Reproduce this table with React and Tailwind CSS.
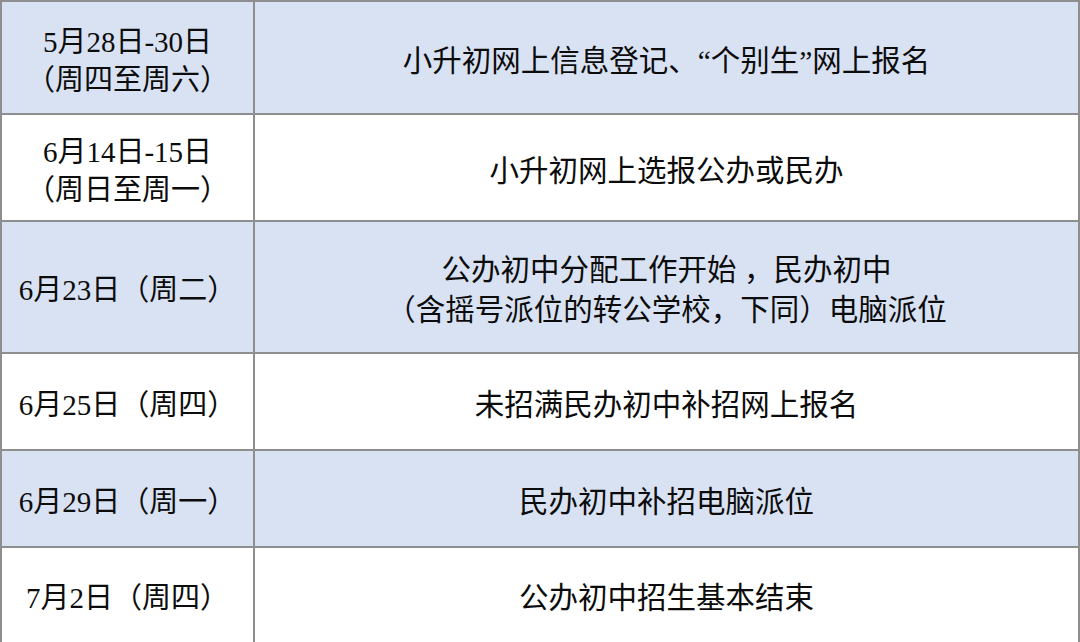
const rows = [
  { date: ["5月28日-30日", "（周四至周六）"], text: ["小升初网上信息登记、“个别生”网上报名"], h: "h-[113px]", blue: true },
  { date: ["6月14日-15日", "（周日至周一）"], text: ["小升初网上选报公办或民办"], h: "h-[107px]", blue: false },
  { date: ["6月23日（周二）"], text: ["公办初中分配工作开始 ，民办初中", "（含摇号派位的转公学校，下同）电脑派位"], h: "h-[132px]", blue: true },
  { date: ["6月25日（周四）"], text: ["未招满民办初中补招网上报名"], h: "h-[97px]", blue: false },
  { date: ["6月29日（周一）"], text: ["民办初中补招电脑派位"], h: "h-[97px]", blue: true },
  { date: ["7月2日（周四）"], text: ["公办初中招生基本结束"], h: "h-[96px]", blue: false },
];

export default function App() {
  return (
    <div className="w-[1080px] h-[642px] bg-white overflow-hidden font-['Liberation_Serif','Noto_Sans_CJK_SC',sans-serif] text-[#0c0c0c]">
      <div className="border-2 border-[#8e8e8e] border-b-0">
        {rows.map((r, i) => (
          <div
            key={i}
            className={`grid grid-cols-[253px_1fr] border-b-2 border-[#8e8e8e] ${r.h} ${r.blue ? "bg-[#d9e2f3]" : "bg-white"}`}
          >
            <div className="flex flex-col items-center justify-center pt-[6px] border-r-2 border-[#8e8e8e] text-[29px] leading-[38px]">
              {r.date.map((d, j) => (
                <div key={j}>{d}</div>
              ))}
            </div>
            <div className="flex flex-col items-center justify-center pt-[6px] text-[29.5px] leading-[40px]">
              {r.text.map((t, j) => (
                <div key={j}>{t}</div>
              ))}
            </div>
          </div>
        ))}
      </div>
    </div>
  );
}
